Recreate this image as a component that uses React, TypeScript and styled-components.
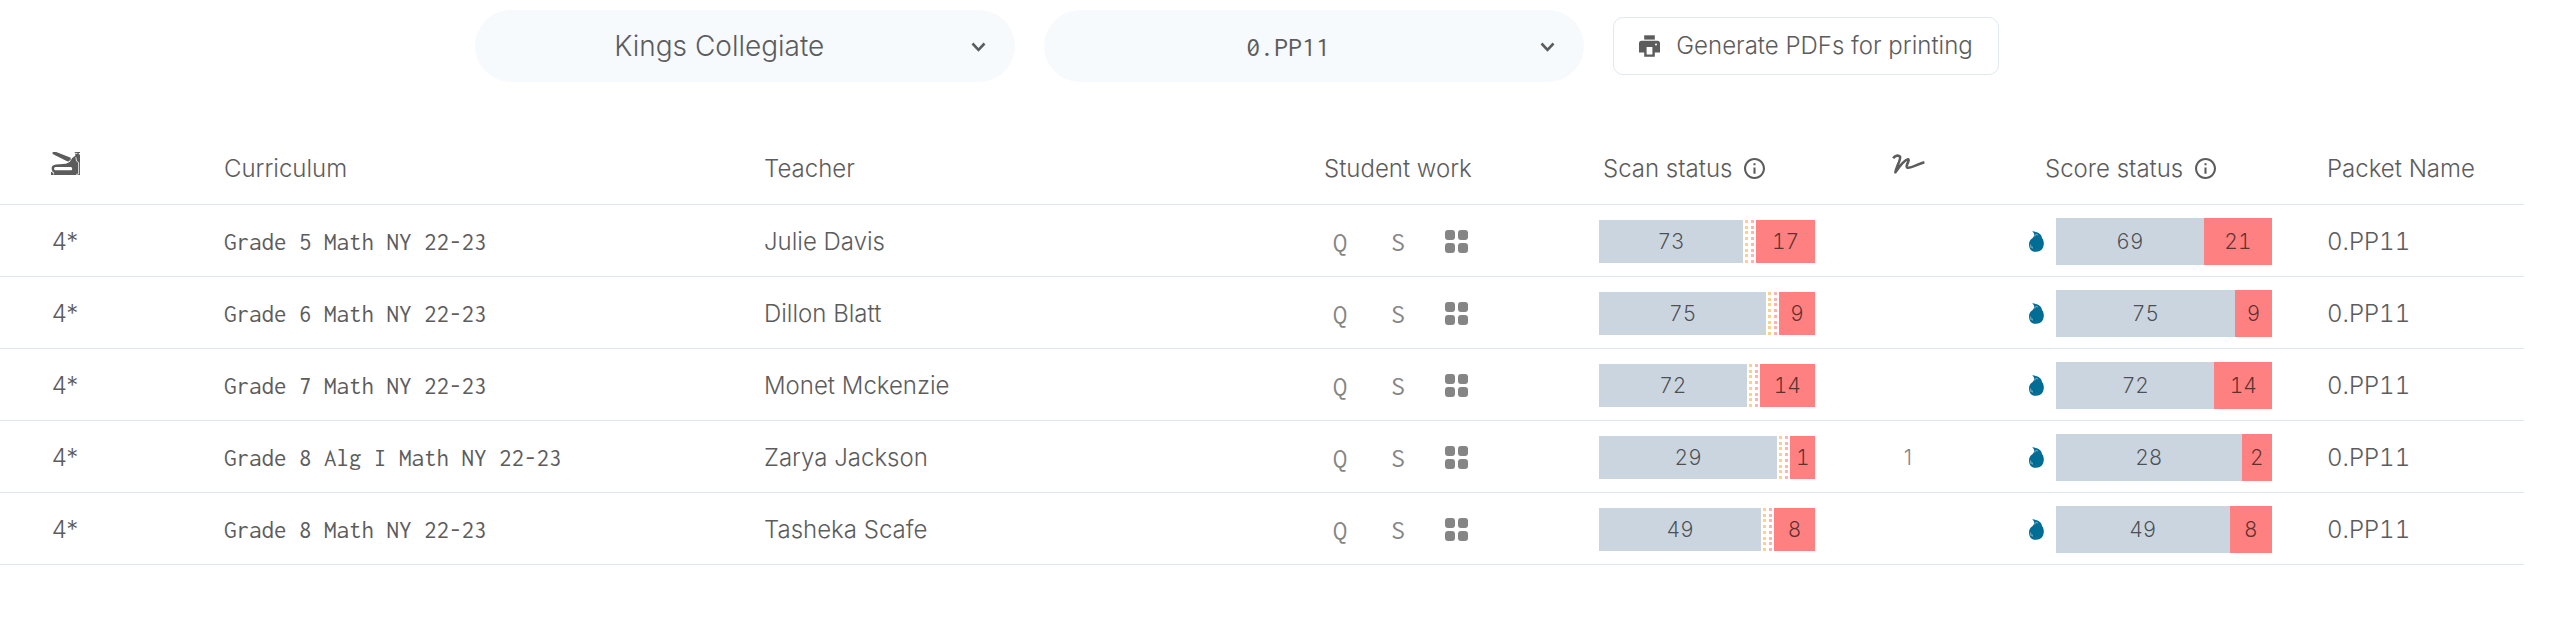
import React from 'react';
import styled, { createGlobalStyle } from 'styled-components';

const sans = "Inter, 'Liberation Sans', sans-serif";
const mono = "Inconsolata, 'Roboto Mono', 'Liberation Mono', monospace";
const ink = '#5c5c5c';
const softInk = '#858585';
const line = '#e2e8f0';

const GlobalStyle = createGlobalStyle`
  *, *::before, *::after { box-sizing: border-box; }
  body {
    margin: 0;
    background: #fff;
    color: ${ink};
    font-family: ${sans};
    font-size: 24px;
    font-weight: 300;
    line-height: 30px;
  }
  svg { display: block; }
`;

const Page = styled.main`
  padding: 10px 52px 40px 0;
`;

const Toolbar = styled.form`
  display: flex;
  justify-content: center;
  align-items: center;
  gap: 29px;
  padding-right: 50px;
`;

const Picker = styled.label`
  position: relative;
  flex: 0 1 540px;
`;

const PickerSelect = styled.select<{ $mono?: boolean }>`
  display: block;
  width: 100%;
  height: 72px;
  padding: 0 52px 0 0;
  border: 0;
  border-radius: 36px;
  appearance: none;
  background: #f6fafd;
  color: ${ink};
  font-family: ${(p) => (p.$mono ? mono : sans)};
  font-size: 28px;
  font-weight: ${(p) => (p.$mono ? 400 : 300)};
  text-align: center;
  text-align-last: center;
  cursor: pointer;
`;

const Chevron = styled.svg`
  position: absolute;
  top: 31px;
  right: 29px;
  pointer-events: none;
`;

const PrintButton = styled.button`
  display: flex;
  align-items: center;
  gap: 16px;
  height: 58px;
  padding: 0 25px;
  border: 1px solid ${line};
  border-radius: 10px;
  background: #fff;
  color: ${ink};
  font: inherit;
  white-space: nowrap;
  cursor: pointer;
`;

const Table = styled.table`
  width: 100%;
  margin-top: 51px;
  border-collapse: separate;
  border-spacing: 0;
  table-layout: fixed;
`;

const Col = styled.col<{ $width: number }>`
  width: ${(p) => p.$width}px;
`;

const HeadCell = styled.th<{ $indent?: number }>`
  height: 72px;
  padding: 0 24px 0 ${(p) => p.$indent ?? 24}px;
  border-bottom: 1px solid ${line};
  font-weight: 300;
  text-align: left;
  white-space: nowrap;
`;

const IconHead = styled(HeadCell)`
  padding: 0 0 10px;
  svg { margin: 0 auto; }
`;

const PacketCountHead = styled(IconHead)`
  padding: 0 70px 10px 0;
`;

const HeadLabel = styled.span`
  display: flex;
  align-items: center;
  gap: 12px;
`;

const Cell = styled.td<{ $indent?: number }>`
  height: 72px;
  padding: 2px 24px 0 ${(p) => p.$indent ?? 24}px;
  border-bottom: 1px solid ${line};
  white-space: nowrap;
`;

const PacketCountCell = styled(Cell)`
  padding: 2px 70px 0 0;
  text-align: center;
`;

const PacketNameCell = styled(Cell)`
  font-variant-numeric: tabular-nums;
`;

const MonoCell = styled(Cell)`
  font-family: ${mono};
  font-size: 25px;
  font-weight: 400;
`;

const SignCell = styled(Cell)`
  padding: 2px 0 0;
  color: ${softInk};
  font-size: 21px;
  text-align: center;
`;

const Actions = styled.div`
  display: flex;
  gap: 26px;
`;

const Action = styled.button`
  display: flex;
  align-items: center;
  justify-content: center;
  width: 32px;
  height: 32px;
  padding: 0;
  border: 0;
  background: none;
  color: ${softInk};
  font-family: ${mono};
  font-size: 28px;
  font-weight: 400;
  cursor: pointer;
`;

const ScoreLine = styled.div`
  display: flex;
  align-items: center;
  gap: 12px;
`;

const Bar = styled.div<{ $tall?: boolean }>`
  display: flex;
  width: 216px;
  height: ${(p) => (p.$tall ? 47 : 43)}px;
  font-size: 21px;
  font-variant-numeric: tabular-nums;
`;

const Segment = styled.span<{ $amount: number; $missing?: boolean }>`
  display: flex;
  align-items: center;
  justify-content: center;
  flex: ${(p) => p.$amount} 0 auto;
  padding: 0 3px;
  background: ${(p) => (p.$missing ? '#ff8080' : '#cbd5e0')};
  color: rgba(0, 0, 0, 0.64);
`;

const DotStrip = styled.span`
  display: flex;
  gap: 3px;
  padding: 0 2px;
`;

const DotColumn = styled.span<{ $color: string }>`
  display: flex;
  flex-direction: column;
  justify-content: space-between;
  color: ${(p) => p.$color};
`;

const Dot = styled.i`
  width: 3px;
  height: 3px;
  background: currentColor;
`;

const ChevronIcon = () => (
  <Chevron width="15" height="12" viewBox="0 0 15 12" fill="none" aria-hidden="true">
    <path d="M1.5 2.5 7.5 8.8 13.5 2.5" stroke={ink} strokeWidth="2.6" />
  </Chevron>
);

const PrinterIcon = () => (
  <svg width="21" height="22" viewBox="0 0 21 22" fill={ink} aria-hidden="true">
    <path d="M5.2 0.3h10.6v4.3H5.2z" />
    <path
      fillRule="evenodd"
      d="M2.5 5.7h16A2.5 2.5 0 0 1 21 8.2v9.3h-5.2v4.2H5.2v-4.2H0V8.2a2.5 2.5 0 0 1 2.5-2.5zM7.6 12v7.6h5.8V12zM17 8.6a1 1 0 1 0 0 2 1 1 0 0 0 0-2z"
    />
  </svg>
);

const StaplerIcon = () => (
  <svg width="29" height="23" viewBox="0 0 29 23" fill={ink} role="img" aria-label="Packets">
    <path d="M1.6 0h3.6L19.8 5.8l-.2 1.800-2 1.800-2-.4L1.600 2z" />
    <path d="M23.600 0H29v1h-1.200v1.600H29V23H0v-3h1.600l-1-3.200C.4 14.200 2 12.700 5 12.500l10-.7 3.600-1.800 2.700-4 3.200-2.400z" />
    <path
      d="M4.600 14.900h15.200c1.600 0 2 3.300.2 3.300H4.600c-2 0-2-3.300 0-3.300z"
      fill="#fff"
    />
    <path d="M23.400 1.400h3M24.800 5.200l.8 4 2 1.300V22l-2.500.4M1 20.200l1.600.2v2" fill="none" stroke="#fff" strokeWidth="0.8" />
  </svg>
);

const SignatureIcon = () => (
  <svg width="33" height="20" viewBox="0 0 33 20" fill="none" role="img" aria-label="Signed">
    <path
      d="M1.200 4.300C3 1.500 6.500.9 8 2.700c1.200 2.300-3.500 9.800-4.600 15.600C7 13 12 6 16 5.200c2.400.8-3.200 7.100-.8 8.400 3.800 1.400 9.800-3.600 17.200-5.400"
      stroke={ink}
      strokeWidth="2.600"
      strokeLinejoin="round"
    />
  </svg>
);

const InfoIcon = () => (
  <svg width="21" height="21" viewBox="2 2 20 20" fill={ink} role="img" aria-label="More information">
    <path d="M11 7h2v2h-2zm0 4h2v6h-2zm1-9C6.480 2 2 6.480 2 12s4.480 10 10 10 10-4.480 10-10S17.520 2 12 2zm0 18c-4.410 0-8-3.590-8-8s3.590-8 8-8 8 3.590 8 8-3.590 8-8 8z" />
  </svg>
);

const GridIcon = () => (
  <svg width="23" height="23" viewBox="0 0 23 23" fill={softInk} aria-hidden="true">
    <rect width="10" height="10" rx="3" />
    <rect x="13" width="10" height="10" rx="3" />
    <rect y="13" width="10" height="10" rx="3" />
    <rect x="13" y="13" width="10" height="10" rx="3" />
  </svg>
);

const DropIcon = () => (
  <svg width="15" height="21" viewBox="0 0 15 21" fill="#006e94" role="img" aria-label="Scored">
    <path d="M3.200.2C8.500.6 12.600 2.800 13 7c2 2.200 2.400 6.500 1 9.500-1.800 4.800-8.500 5.400-11.600 3C-.6 17-.6 11.200 1.600 8.800 3.400 7.400 4.900 6 5.200 4 5.200 2.400 4.400 1.200 3.200.2z" />
    <path d="M5 5l1.600-.4M6.400 3.400l2.400.5M1.600 13.500l.4 3.600M3 15.500l.6 2" fill="none" stroke="#fff" strokeWidth="0.5" />
  </svg>
);

const dots = Array.from({ length: 8 }, (_, i) => i);

function Dots({ color }: { color: string }) {
  return (
    <DotColumn $color={color}>
      {dots.map((i) => (
        <Dot key={i} />
      ))}
    </DotColumn>
  );
}

type Row = {
  curriculum: string;
  teacher: string;
  scan: [number, number];
  signed?: number;
  score: [number, number];
};

const rows: Row[] = [
  { curriculum: 'Grade 5 Math NY 22-23', teacher: 'Julie Davis', scan: [73, 17], score: [69, 21] },
  { curriculum: 'Grade 6 Math NY 22-23', teacher: 'Dillon Blatt', scan: [75, 9], score: [75, 9] },
  { curriculum: 'Grade 7 Math NY 22-23', teacher: 'Monet Mckenzie', scan: [72, 14], score: [72, 14] },
  { curriculum: 'Grade 8 Alg I Math NY 22-23', teacher: 'Zarya Jackson', scan: [29, 1], signed: 1, score: [28, 2] },
  { curriculum: 'Grade 8 Math NY 22-23', teacher: 'Tasheka Scafe', scan: [49, 8], score: [49, 8] },
];

const columns = [200, 540, 560, 275, 264, 138, 326, 221];

export default function App() {
  return (
    <Page>
      <GlobalStyle />
      <Toolbar>
        <Picker>
          <PickerSelect aria-label="School" defaultValue="Kings Collegiate">
            <option>Kings Collegiate</option>
          </PickerSelect>
          <ChevronIcon />
        </Picker>
        <Picker>
          <PickerSelect $mono aria-label="Packet" defaultValue="0.PP11">
            <option>0.PP11</option>
          </PickerSelect>
          <ChevronIcon />
        </Picker>
        <PrintButton type="button">
          <PrinterIcon />
          Generate PDFs for printing
        </PrintButton>
      </Toolbar>

      <Table>
        <colgroup>
          {columns.map((width, i) => (
            <Col key={i} $width={width} />
          ))}
        </colgroup>
        <thead>
          <tr>
            <PacketCountHead><StaplerIcon /></PacketCountHead>
            <HeadCell>Curriculum</HeadCell>
            <HeadCell>Teacher</HeadCell>
            <HeadCell>Student work</HeadCell>
            <HeadCell $indent={28}>
              <HeadLabel>Scan status <InfoIcon /></HeadLabel>
            </HeadCell>
            <IconHead><SignatureIcon /></IconHead>
            <HeadCell $indent={68}>
              <HeadLabel>Score status <InfoIcon /></HeadLabel>
            </HeadCell>
            <HeadCell>Packet Name</HeadCell>
          </tr>
        </thead>
        <tbody>
          {rows.map((row) => (
            <tr key={row.curriculum}>
              <PacketCountCell>4*</PacketCountCell>
              <MonoCell>{row.curriculum}</MonoCell>
              <Cell>{row.teacher}</Cell>
              <Cell>
                <Actions>
                  <Action type="button">Q</Action>
                  <Action type="button">S</Action>
                  <Action type="button" aria-label="All work"><GridIcon /></Action>
                </Actions>
              </Cell>
              <Cell>
                <Bar>
                  <Segment $amount={row.scan[0]}>{row.scan[0]}</Segment>
                  <DotStrip>
                    <Dots color="#ffd08a" />
                    <Dots color="#ffb3b3" />
                  </DotStrip>
                  <Segment $amount={row.scan[1]} $missing>{row.scan[1]}</Segment>
                </Bar>
              </Cell>
              <SignCell>{row.signed}</SignCell>
              <Cell $indent={52}>
                <ScoreLine>
                  <DropIcon />
                  <Bar $tall>
                    <Segment $amount={row.score[0]}>{row.score[0]}</Segment>
                    <Segment $amount={row.score[1]} $missing>{row.score[1]}</Segment>
                  </Bar>
                </ScoreLine>
              </Cell>
              <PacketNameCell>0.PP11</PacketNameCell>
            </tr>
          ))}
        </tbody>
      </Table>
    </Page>
  );
}
